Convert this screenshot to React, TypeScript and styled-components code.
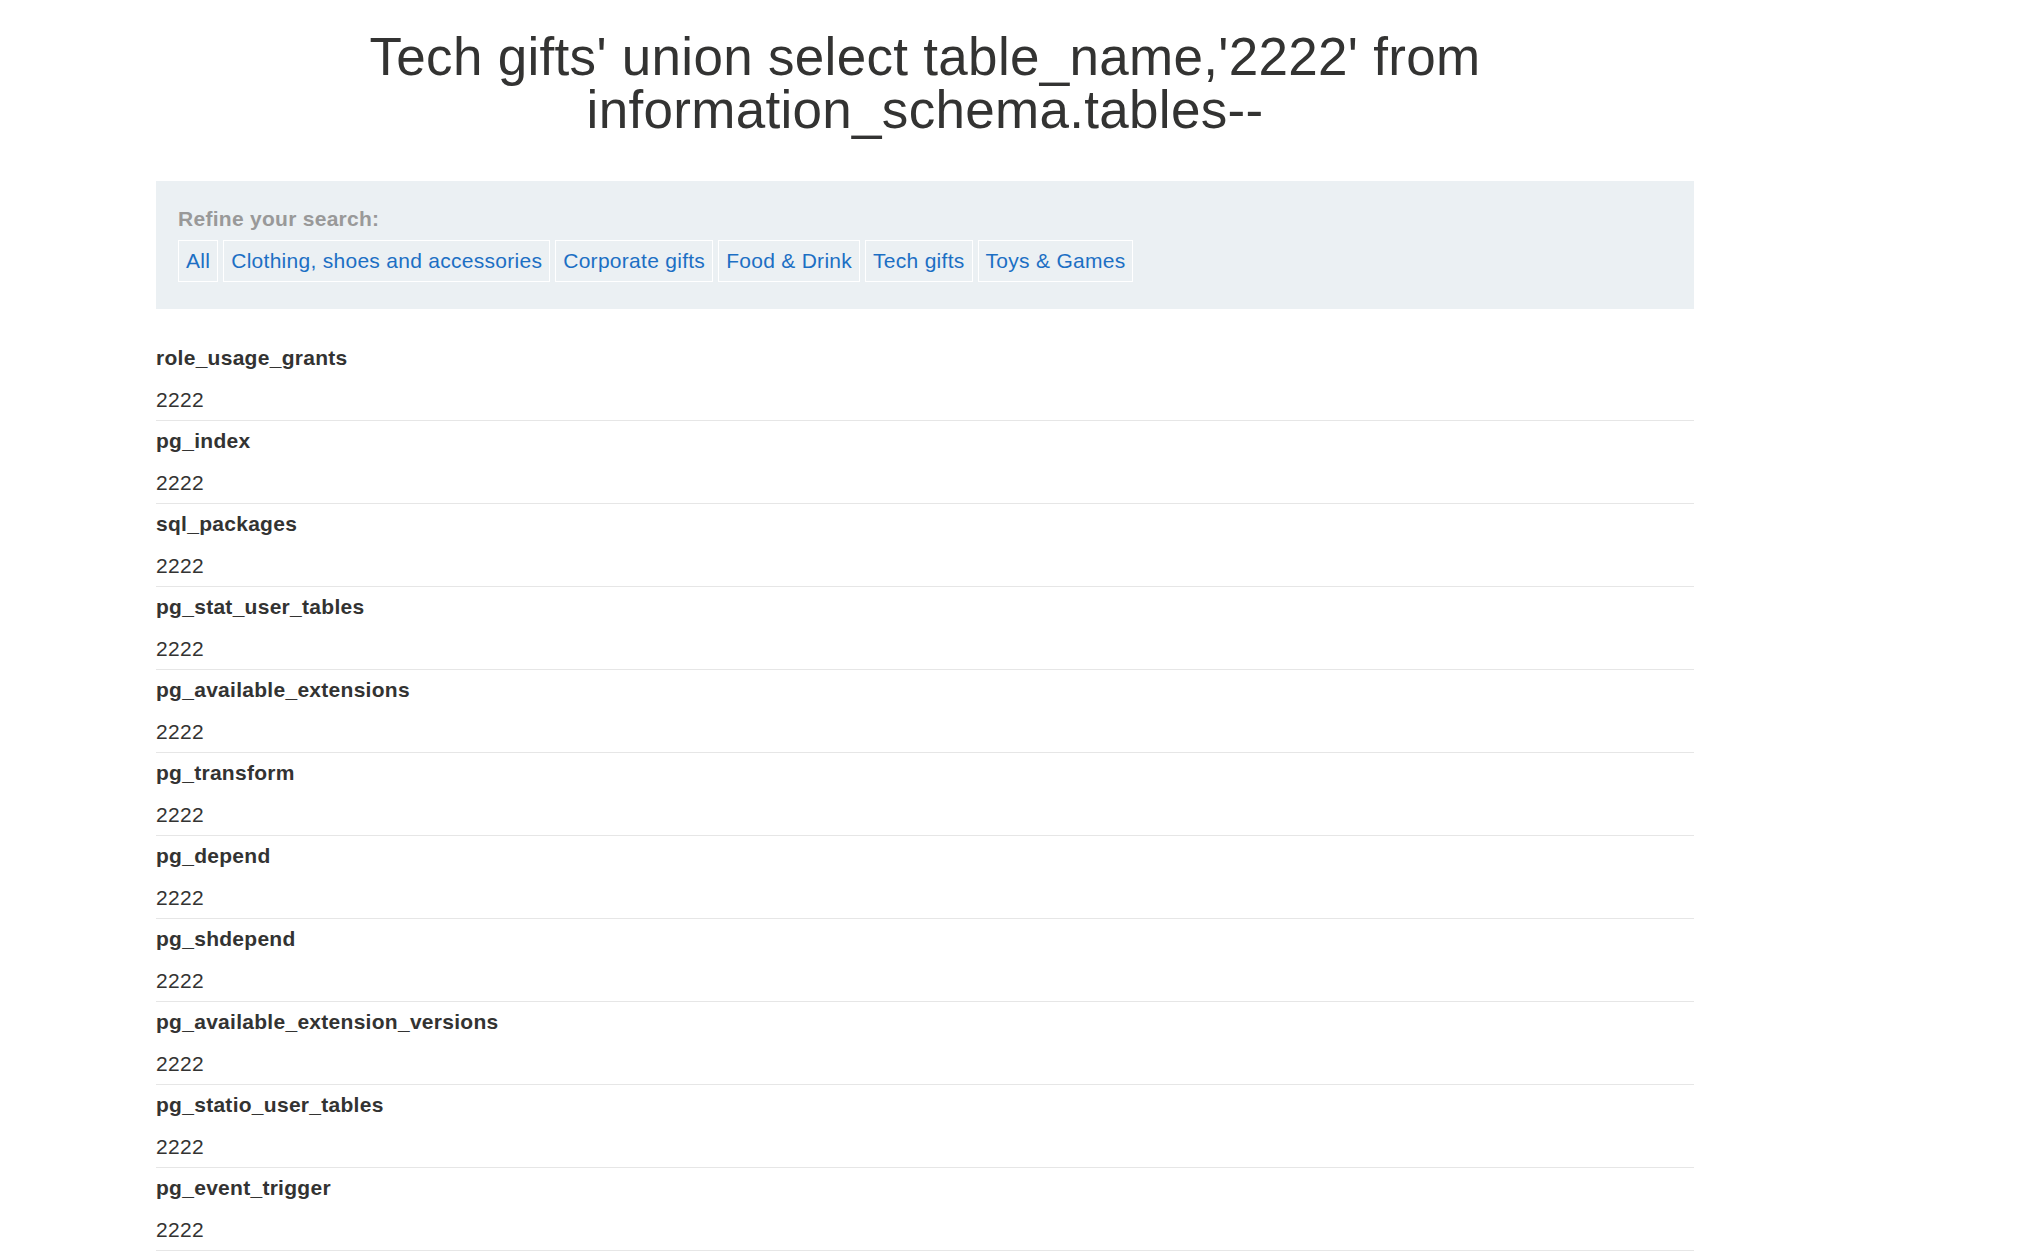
import styled, { createGlobalStyle } from 'styled-components';

const GlobalStyle = createGlobalStyle`
  html, body {
    margin: 0;
    padding: 0;
    background: #fff;
  }
  body {
    font-family: 'Liberation Sans', Arial, sans-serif;
    color: #333332;
    letter-spacing: 0.28px;
  }
`;

const Container = styled.div`
  width: 1538px;
  margin-left: 156px;
  padding-top: 30px;
`;

const Title = styled.h1`
  margin: 0 0 45px;
  font-size: 53px;
  font-weight: 400;
  line-height: 53px;
  letter-spacing: 0.3px;
  text-align: center;
  color: #333332;
  padding: 0 200px;
`;

const Filters = styled.section`
  background: #ebf0f3;
  padding: 23px 20px 27px 22px;
`;

const FilterLabel = styled.div`
  font-size: 21px;
  line-height: 29px;
  font-weight: 700;
  color: #999999;
  margin-bottom: 7px;
`;

const FilterList = styled.div`
  display: flex;
  gap: 5px;
`;

const FilterLink = styled.a`
  display: block;
  height: 40px;
  line-height: 40px;
  padding: 0 7px;
  border: 1px solid #fff;
  font-size: 21px;
  color: #1c6fc4;
  text-decoration: none;
  cursor: pointer;
`;

const Results = styled.div`
  margin-top: 29px;
`;

const Row = styled.div`
  padding: 5px 0 6px;
  border-bottom: 1px solid #e6e6e6;
`;

const Name = styled.div`
  font-size: 21px;
  line-height: 29px;
  font-weight: 700;
  color: #333332;
`;

const Value = styled.div`
  font-size: 21px;
  line-height: 29px;
  margin-top: 13px;
  color: #333332;
`;

const categories = ['All', 'Clothing, shoes and accessories', 'Corporate gifts', 'Food & Drink', 'Tech gifts', 'Toys & Games'];

const tables = [
  'role_usage_grants',
  'pg_index',
  'sql_packages',
  'pg_stat_user_tables',
  'pg_available_extensions',
  'pg_transform',
  'pg_depend',
  'pg_shdepend',
  'pg_available_extension_versions',
  'pg_statio_user_tables',
  'pg_event_trigger',
];

export default function App() {
  return (
    <>
      <GlobalStyle />
      <Container>
        <Title>Tech gifts' union select table_name,'2222' from information_schema.tables--</Title>
        <Filters>
          <FilterLabel>Refine your search:</FilterLabel>
          <FilterList>
            {categories.map((c) => (
              <FilterLink key={c}>{c}</FilterLink>
            ))}
          </FilterList>
        </Filters>
        <Results>
          {tables.map((t) => (
            <Row key={t}>
              <Name>{t}</Name>
              <Value>2222</Value>
            </Row>
          ))}
        </Results>
      </Container>
    </>
  );
}
